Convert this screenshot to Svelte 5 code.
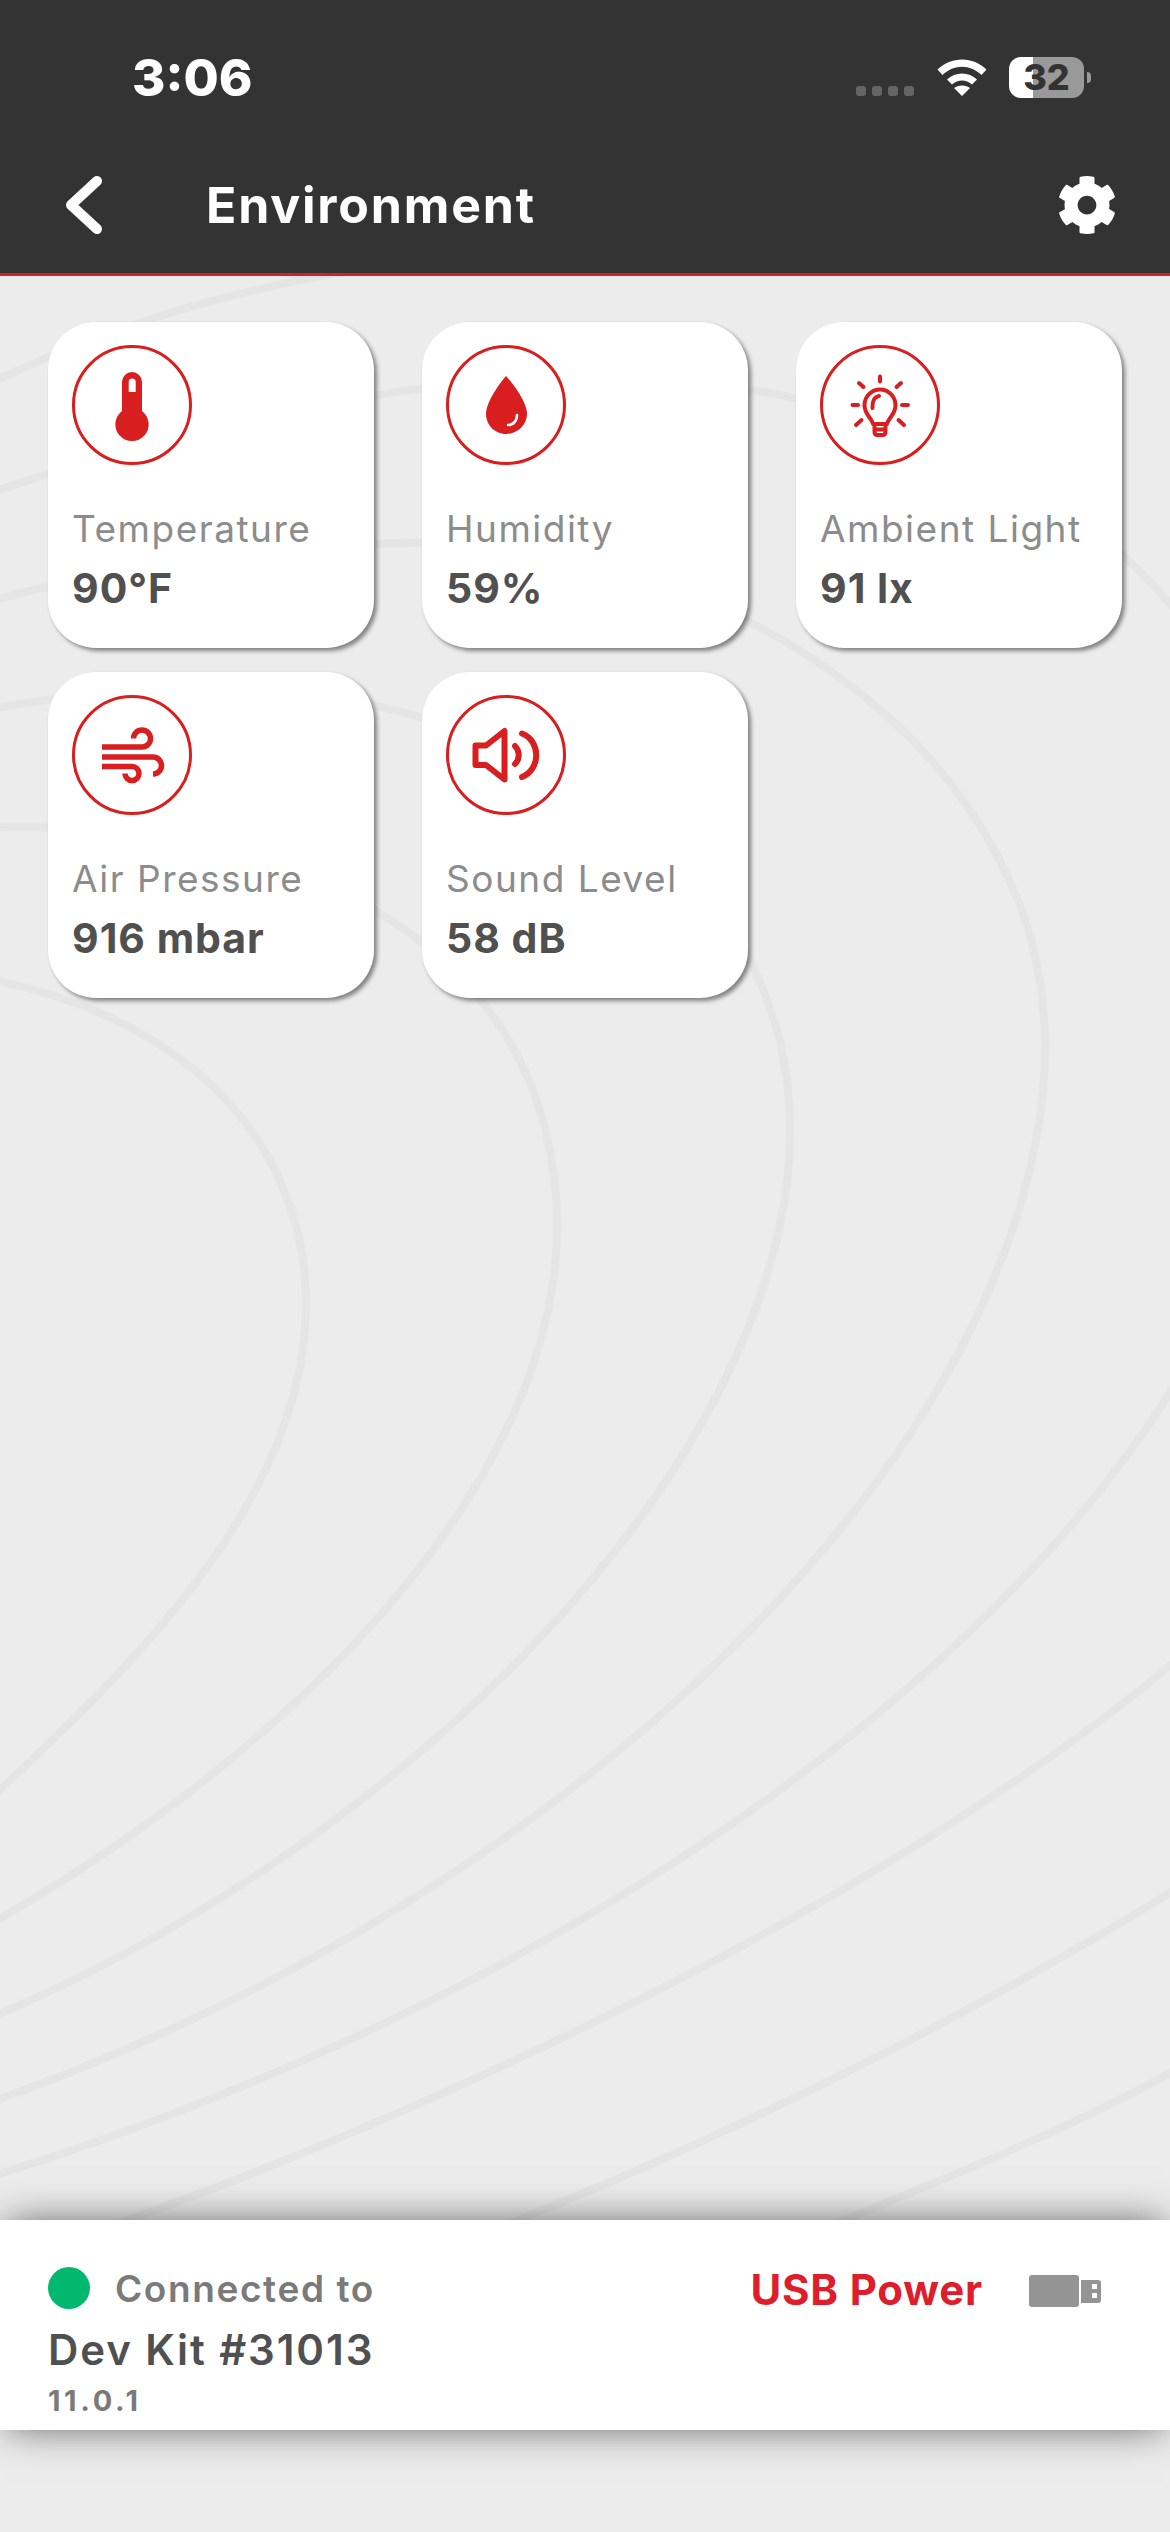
<script>
  const arcs = [
    'M-20 978C170 1010 306 1130 306 1305C306 1500 130 1670 -20 1808',
    'M-20 828C300 815 557 950 557 1226C557 1480 300 1750 -20 1930',
    'M-20 712C60 695 130 688 210 688C500 688 790 850 790 1130C790 1460 400 1850 -20 2022',
    'M-20 604C120 565 270 543 420 543C740 543 1045 760 1045 1045C1045 1420 600 1890 -20 2106',
    'M-20 496C180 430 380 378 590 378C960 378 1300 560 1300 990C1300 1480 700 1960 -20 2180',
    'M-20 388C100 330 220 290 400 262',
    'M1200 1640C950 1860 500 2090 100 2230',
    'M1200 1874C1000 2000 750 2130 480 2235',
    'M1200 2056C1100 2115 980 2165 800 2238'
  ];

  const cards = [
    { id: 'temp', label: 'Temperature', value: '90°F' },
    { id: 'drop', label: 'Humidity', value: '59%' },
    { id: 'bulb', label: 'Ambient Light', value: '91 lx' },
    { id: 'wind', label: 'Air Pressure', value: '916 mbar' },
    { id: 'sound', label: 'Sound Level', value: '58 dB' }
  ];
</script>

<div class="page">
  <svg class="arcs" viewBox="0 0 1170 2532" aria-hidden="true">
    {#each arcs as d}
      <path {d} />
    {/each}
  </svg>

  <header class="top">
    <div class="status">
      <span class="time">3:06</span>
      <div class="status-right">
        <div class="dots"><i></i><i></i><i></i><i></i></div>
        <svg class="wifi" viewBox="0 0 50 37">
          <path d="M0.5 10.5 C14 -3 36 -3 49.5 10.5 L44.5 16 C33 5 17 5 5.5 16 Z" />
          <path d="M10 20.5 C18 12.5 32 12.5 40 20.5 L35 25.5 C29 20 21 20 15 25.5 Z" />
          <path d="M17 29 C21 25.5 29 25.5 33 29 L25 37 Z" />
        </svg>
        <div class="battery">
          <div class="cell"><span>32</span></div>
          <div class="nub"></div>
        </div>
      </div>
    </div>
    <nav class="bar">
      <svg class="back" viewBox="0 0 40 58">
        <path d="M32 5 L6 29 L32 53" />
      </svg>
      <h1>Environment</h1>
      <svg class="gear" viewBox="0 0 512 512">
        <path d="M487.4 315.7l-42.6-24.6c4.3-23.2 4.3-47 0-70.2l42.6-24.6c4.9-2.8 7.1-8.6 5.5-14-11.1-35.6-30-67.8-54.7-94.6-3.8-4.1-10-5.1-14.8-2.3L380.8 110c-17.9-15.4-38.5-27.3-60.8-35.1V25.8c0-5.6-3.9-10.5-9.4-11.7-36.7-8.2-74.3-7.8-109.2 0-5.5 1.2-9.4 6.1-9.4 11.7V75c-22.2 7.9-42.8 19.8-60.8 35.1L88.7 85.5c-4.9-2.8-11-1.9-14.8 2.3-24.7 26.7-43.6 58.9-54.7 94.6-1.7 5.4.6 11.2 5.5 14L67.3 221c-4.3 23.2-4.3 47 0 70.2l-42.6 24.6c-4.9 2.8-7.1 8.6-5.5 14 11.1 35.6 30 67.8 54.7 94.6 3.8 4.1 10 5.1 14.8 2.3l42.6-24.6c17.9 15.4 38.5 27.3 60.8 35.1v49.2c0 5.6 3.9 10.5 9.4 11.7 36.7 8.2 74.3 7.8 109.2 0 5.5-1.2 9.4-6.1 9.4-11.7v-49.2c22.2-7.9 42.8-19.8 60.8-35.1l42.6 24.6c4.9 2.8 11 1.9 14.8-2.3 24.7-26.7 43.6-58.9 54.7-94.6 1.5-5.5-.7-11.3-5.6-14.1zM256 336c-44.1 0-80-35.9-80-80s35.9-80 80-80 80 35.9 80 80-35.9 80-80 80z" />
      </svg>
    </nav>
  </header>

  <main class="grid">
    {#each cards as c}
      <article class="card">
        <svg class="icon" viewBox="0 0 120 120">
          <circle class="ring" cx="60" cy="60" r="58.5" />
          {#if c.id === 'temp'}
            <path class="fill" fill-rule="evenodd" d="M50 70 V37 A10 10 0 0 1 70 37 V66 A16.7 16.7 0 1 1 50 66 Z M56.7 47 H63.7 V37 A3.5 3.5 0 0 0 56.7 37 Z" />
          {:else if c.id === 'drop'}
            <path class="fill" d="M60 31 C60 31 40 54 40 69 C40 80 49 89 60 89 C71 89 81 80 81 69 C81 54 60 31 60 31 Z" />
            <path class="shine" d="M62 80 C67 80 71 76 71 70" />
          {:else if c.id === 'bulb'}
            <g class="line thin">
              <path d="M53 79 C52 73 44.5 70 44.5 60 A15.5 15.5 0 0 1 75.5 60 C75.5 70 68 73 67 79 Z" />
              <path d="M54.5 79 V87 Q54.5 90 57.5 90 H62.5 Q65.5 90 65.5 87 V79 M54.5 84.5 H65.5" />
              <path d="M52.5 63 C52 57 54 52 59 51" />
              <path d="M60 31.5 V36.5 M39 38 L43.5 42 M81 38 L76.5 42 M32.5 60 H38 M82 60 H88 M36 80 L41.5 75 M84 80 L78.5 75" />
            </g>
          {:else if c.id === 'wind'}
            <g class="line butt">
              <path d="M30 52 H70 A8.5 8.5 0 1 0 61.5 43.5" />
              <path d="M30 62 H81 A8.5 8.5 0 0 1 81 79" />
              <path d="M30 71.5 H60 A7 7 0 1 1 53 78.5" />
            </g>
          {:else}
            <g class="line heavy">
              <path d="M29.5 50.5 H40 L58.5 36 V84.5 L40 70 H29.5 Z" />
              <path d="M69 51 C74 56 74 64 69 69" />
              <path d="M76 38.5 C95 46 95 74 76 82" />
            </g>
          {/if}
        </svg>
        <div class="label">{c.label}</div>
        <div class="value">{c.value}</div>
      </article>
    {/each}
  </main>

  <section class="panel">
    <div class="info">
      <div class="conn"><span class="led"></span><span>Connected to</span></div>
      <div class="kit">Dev Kit #31013</div>
      <div class="ver">11.0.1</div>
    </div>
    <div class="power">
      <span class="usb">USB Power</span>
      <div class="stick"><div class="body"></div><div class="plug"><i></i><i></i></div></div>
    </div>
  </section>
</div>

<style>
  :global(body) { margin: 0; background: #ececec; }
  .page {
    position: relative;
    width: 1170px;
    height: 2532px;
    display: flex;
    flex-direction: column;
    overflow: hidden;
    background: #ececec;
    font-family: Inter, "Liberation Sans", sans-serif;
  }
  .arcs { position: absolute; inset: 0; width: 1170px; height: 2532px; }
  .arcs path { fill: none; stroke: #e5e5e5; stroke-width: 8; }

  .top {
    position: relative;
    height: 273px;
    background: #333;
    border-bottom: 3px solid #d81e2c;
    display: flex;
    flex-direction: column;
    color: #fff;
  }
  .status {
    height: 152px;
    display: flex;
    justify-content: space-between;
    padding: 57px 79px 0 132px;
    box-sizing: border-box;
  }
  .time { font-size: 51px; font-weight: 800; line-height: 42px; }
  .status-right { display: flex; align-items: flex-start; }
  .dots { display: flex; gap: 6px; margin-top: 29px; }
  .dots i { width: 10px; height: 10px; border-radius: 3px; background: #666; }
  .wifi { width: 50px; height: 37px; margin: 2px 0 0 23px; fill: #fff; }
  .battery { display: flex; align-items: center; margin-left: 22px; }
  .cell {
    width: 75px;
    height: 41px;
    border-radius: 12px;
    background: linear-gradient(90deg, #fff 32%, #999 32%);
    color: #333;
    display: flex;
    align-items: center;
    justify-content: center;
    font-size: 36px;
    font-weight: 800;
    line-height: 41px;
  }
  .nub { width: 4px; height: 11px; margin-left: 3px; background: #999; border-radius: 0 6px 6px 0; }

  .bar {
    display: flex;
    align-items: center;
    height: 100px;
    padding: 0 53px 0 65px;
    margin-top: 3px;
  }
  .back { width: 40px; height: 58px; fill: none; stroke: #fff; stroke-width: 10; stroke-linecap: round; stroke-linejoin: round; }
  h1 { flex: 1; margin: 0 0 0 101px; font-size: 50px; font-weight: 700; line-height: 60px; letter-spacing: 1.8px; }
  .gear { width: 60px; height: 60px; fill: #fff; }

  .grid {
    position: relative;
    display: grid;
    grid-template-columns: repeat(3, 326px);
    grid-auto-rows: 326px;
    column-gap: 48px;
    row-gap: 24px;
    padding: 46px 48px 0;
    flex: 1;
    align-content: start;
  }
  .card {
    background: #fff;
    border-radius: 48px;
    box-shadow: 3px 3px 4px rgba(0, 0, 0, 0.45);
    padding: 23px 24px;
    box-sizing: border-box;
  }
  .icon { display: block; width: 120px; height: 120px; }
  .ring { fill: none; stroke: #d81e1e; stroke-width: 3; }
  .fill { fill: #d81e1e; }
  .shine { fill: none; stroke: #fff; stroke-width: 2.6; stroke-linecap: round; }
  .line { fill: none; stroke: #d81e1e; stroke-width: 5.5; stroke-linecap: round; stroke-linejoin: round; }
  .line.thin { stroke-width: 4; }
  .line.heavy { stroke-width: 6; }
  .line.butt { stroke-linecap: butt; }
  .label { margin-top: 43px; font-size: 37px; line-height: 42px; color: #8c8c8c; letter-spacing: 1.5px; }
  .value { margin-top: 14px; font-size: 41px; line-height: 48px; font-weight: 700; color: #505050; letter-spacing: 1px; }

  .panel {
    position: relative;
    height: 210px;
    margin-bottom: 102px;
    background: #fff;
    box-shadow: 0 0 40px -6px rgba(0, 0, 0, 0.7);
    display: flex;
    justify-content: space-between;
    box-sizing: border-box;
    padding: 47px 69px 0 48px;
  }
  .conn { display: flex; align-items: center; gap: 25px; height: 42px; font-size: 37px; font-weight: 600; color: #7a7a7a; letter-spacing: 1.6px; }
  .led { width: 42px; height: 42px; border-radius: 50%; background: #00b96f; }
  .kit { margin-top: 16px; font-size: 42px; line-height: 50px; font-weight: 600; color: #505050; letter-spacing: 1.9px; }
  .ver { margin-top: 9px; font-size: 29px; line-height: 34px; font-weight: 700; letter-spacing: 3.6px; color: #7a7a7a; }
  .power { display: flex; align-items: flex-start; gap: 46px; }
  .usb { font-size: 42px; line-height: 50px; font-weight: 700; color: #dc1e2d; letter-spacing: 0.8px; margin-top: -2px; }
  .stick { display: flex; align-items: center; gap: 2px; margin-top: 8px; }
  .body { width: 50px; height: 32px; background: #949494; border-radius: 3px; }
  .plug {
    width: 20px; height: 23px; background: #949494; border-radius: 0 3px 3px 0;
    display: flex; flex-direction: column; align-items: flex-end; justify-content: center;
    gap: 4px; padding-right: 4px; box-sizing: border-box;
  }
  .plug i { width: 5px; height: 5px; background: #fff; }
</style>
